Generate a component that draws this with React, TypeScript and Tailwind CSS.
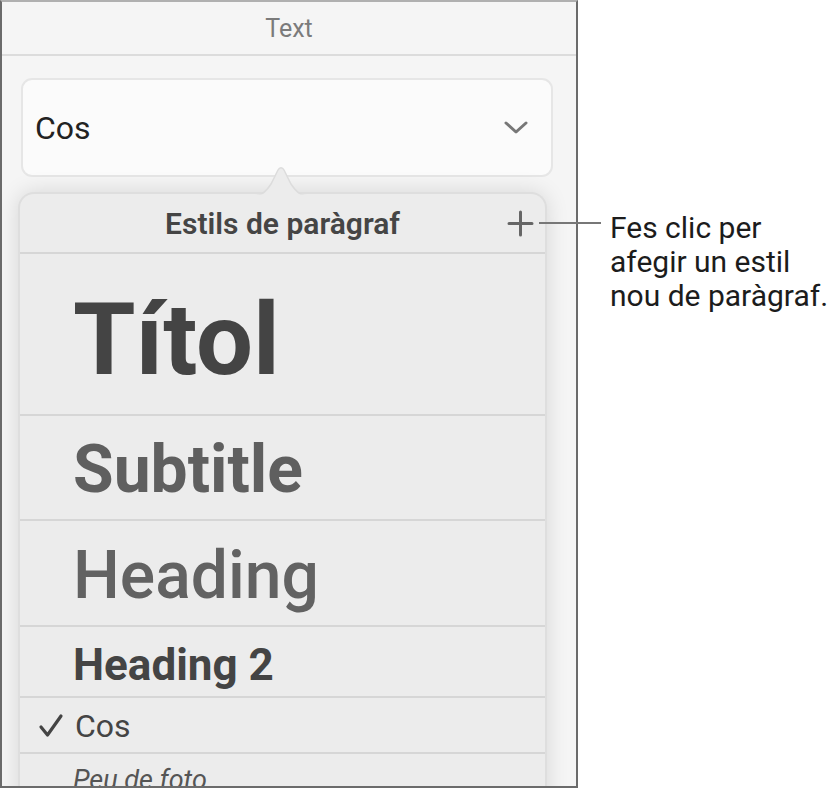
import React from "react";

const font = { fontFamily: '"Roboto", "Liberation Sans", sans-serif' };

function Chevron() {
  return (
    <svg width="26" height="16" viewBox="0 0 26 16" className="text-[#777]">
      <path d="M3 3 L13 12 L23 3" fill="none" stroke="currentColor" strokeWidth="3" strokeLinecap="round" strokeLinejoin="round" />
    </svg>
  );
}

function Plus() {
  return (
    <svg width="27" height="27" viewBox="0 0 27 27" className="text-[#666]">
      <path d="M13.5 2 V25 M2 13.5 H25" fill="none" stroke="currentColor" strokeWidth="3" strokeLinecap="round" />
    </svg>
  );
}

function Check() {
  return (
    <svg width="26" height="26" viewBox="0 0 26 26" className="text-[#444]">
      <path d="M3 14 L9.5 22 L23 3" fill="none" stroke="currentColor" strokeWidth="3.2" strokeLinecap="round" strokeLinejoin="round" />
    </svg>
  );
}

function StyleRow({ className, children }: { className: string; children: React.ReactNode }) {
  return <div className={`flex items-center border-b-2 border-[#d6d6d6] ${className}`}>{children}</div>;
}

export default function App() {
  return (
    <div className="relative flex w-[833px] h-[788px] bg-white overflow-hidden" style={font}>
      {/* inspector panel */}
      <div className="w-[578px] h-[788px] shrink-0 flex flex-col bg-[#f5f5f5] border-2 border-[#6b6b6b] border-t-[#b0b0b0] overflow-hidden">
        <div className="h-[54px] shrink-0 flex items-center justify-center pt-[2px] border-b-2 border-[#dcdcdc] text-[25px] text-[#7b7b7b]">
          Text
        </div>

        <div className="ml-[19px] mt-[22px] w-[532px] h-[99px] shrink-0 flex items-center justify-between pl-[12px] pr-[22px] rounded-[11px] bg-[#fbfbfb] border-2 border-[#e6e6e6]">
          <span className="text-[32px] text-[#222]">Cos</span>
          <Chevron />
        </div>

        <div className="relative ml-[16px] mt-[15px] w-[529px] grow rounded-t-[16px] bg-[#ececec] border-2 border-b-0 border-[#dedede] shadow-[0_0_22px_rgba(0,0,0,0.13)]">
          {/* popover arrow */}
          <svg className="absolute left-[231px] top-[-28px]" width="60" height="30" viewBox="0 0 60 30">
            <path d="M0 30 C10 30 14 27 20 18 L27 4 C28.5 1 31.5 1 33 4 L40 18 C46 27 50 30 60 30 Z" fill="#ececec" stroke="#dcdcdc" strokeWidth="1.5" />
            <rect x="0" y="28.5" width="60" height="2" fill="#ececec" />
          </svg>

          <div className="relative h-[60px] flex items-center justify-center border-b-2 border-[#d6d6d6]">
            <span className="text-[30px] font-semibold text-[#454545]">Estils de paràgraf</span>
            <div className="absolute right-[11px] top-[16px]">
              <Plus />
            </div>
          </div>

          <StyleRow className="h-[162px] pl-[53px] pt-[10px]">
            <span className="text-[101px] leading-none font-bold text-[#444]">Títol</span>
          </StyleRow>
          <StyleRow className="h-[105px] pl-[53px] pt-[4px]">
            <span className="text-[66px] leading-none font-bold text-[#5f5f5f]">Subtitle</span>
          </StyleRow>
          <StyleRow className="h-[106px] pl-[53px] pt-[5px]">
            <span className="text-[66px] leading-none font-medium text-[#626262]">Heading</span>
          </StyleRow>
          <StyleRow className="h-[71px] pl-[53px] pt-[6px]">
            <span className="text-[44px] leading-none font-bold text-[#444]">Heading 2</span>
          </StyleRow>
          <StyleRow className="h-[56px] pt-[2px]">
            <span className="w-[55px] pl-[18px] flex">
              <Check />
            </span>
            <span className="text-[32px] leading-none text-[#444]">Cos</span>
          </StyleRow>
          <div className="h-[60px] flex items-start pl-[53px] pt-[6px]">
            <span className="text-[27px] italic text-[#555]">Peu de foto</span>
          </div>
        </div>
      </div>

      {/* callout */}
      <div className="absolute left-[539px] top-[222px] w-[62px] h-[2px] bg-[#777]" />
      <div className="pl-[32px] pt-[211px] text-[30px] leading-[34px] text-[#1c1c1c]">
        <p>Fes clic per</p>
        <p>afegir un estil</p>
        <p>nou de paràgraf.</p>
      </div>
    </div>
  );
}
